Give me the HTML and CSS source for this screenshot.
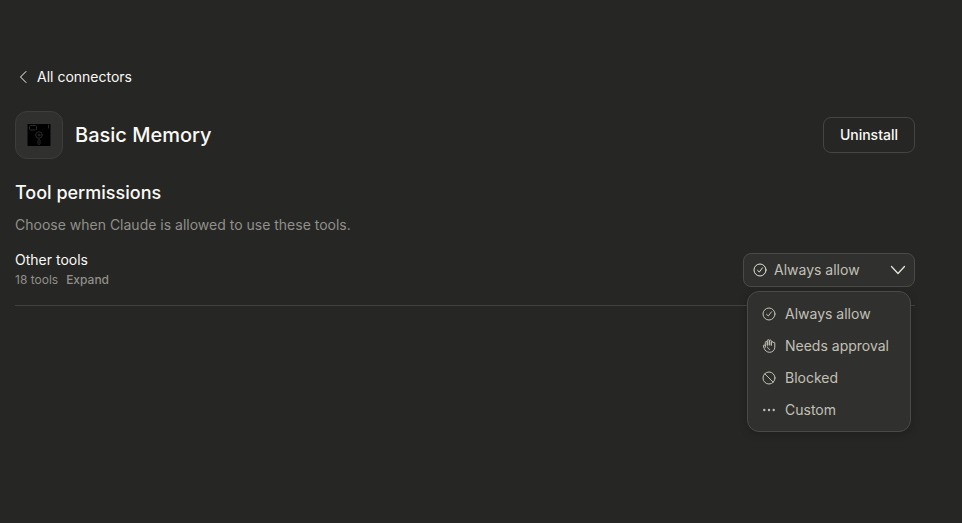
FILE: index.html
```html
<!DOCTYPE html>
<html lang="en">
  <head>
    <meta charset="UTF-8" />
    <meta name="viewport" content="width=device-width, initial-scale=1.0" />
    <title>Basic Memory - Connectors</title>
    <link rel="stylesheet" href="styles.css" />
  </head>
  <body>
    <main>
      <a class="back" href="#">
        <svg width="16" height="16" viewBox="0 0 16 16">
          <path d="M11 2.5 5.5 8l5.5 5.5" />
        </svg>
        All connectors
      </a>

      <header class="connector">
        <div class="logo">
          <svg width="24" height="24" viewBox="0 0 24 24">
            <path class="disk" d="M.5 1h23v22H.5z" />
            <rect x="2.5" y="2.5" width="7" height="4.5" rx="1" />
            <path d="M21.5 2v3" />
            <circle cx="12" cy="12" r="3.3" />
            <circle cx="12" cy="12" r="1" />
            <rect x="11" y="16.5" width="2" height="5" rx="1" />
          </svg>
        </div>
        <h1>Basic Memory</h1>
        <button type="button" class="uninstall">Uninstall</button>
      </header>

      <section>
        <h2>Tool permissions</h2>
        <p class="hint">Choose when Claude is allowed to use these tools.</p>

        <div class="group">
          <div class="group-info">
            <label for="permission">Other tools</label>
            <div class="group-meta">
              <span>18 tools</span>
              <button type="button" class="expand">Expand</button>
            </div>
          </div>

          <div class="picker">
            <svg class="picker-icon" width="14" height="14" viewBox="0 0 14 14">
              <circle cx="7" cy="7" r="6" />
              <path d="m4.6 7.4 1.7 1.6 3.2-4.2" />
            </svg>
            <select id="permission">
              <option value="allow">Always allow</option>
              <option value="ask">Needs approval</option>
              <option value="blocked">Blocked</option>
              <option value="custom">Custom</option>
            </select>
            <svg class="picker-arrow" width="16" height="16" viewBox="0 0 16 16">
              <path d="m1.5 4.5 6.5 7 6.500-7" />
            </svg>

            <div class="menu">
              <button type="button" value="allow">
                <svg width="14" height="14" viewBox="0 0 14 14">
                  <circle cx="7" cy="7" r="6" />
                  <path d="m4.6 7.4 1.7 1.6 3.2-4.2" />
                </svg>
                Always allow
              </button>
              <button type="button" value="ask">
                <svg width="14" height="14" viewBox="0 0 14 14">
                  <path d="M3.3 8.300V3.500a1 1 0 0 1 2 0V6.500V1.700a1 1 0 0 1 2 0V6.300V2a1 1 0 0 1 2 0V6.500V3.600a1 1 0 0 1 2 0" />
                  <path d="M11.300 3.600a.8.800 0 0 1 1.500.400V8.300a5 5 0 0 1-5 5c-3 0-4.800-1.600-5.600-4L1.300 7a.9.900 0 0 1 1.500-.8l.500.800" />
                  <path d="M5.500 8c.3 1.400 1 2.200 2.200 2.500" />
                </svg>
                Needs approval
              </button>
              <button type="button" value="blocked">
                <svg width="14" height="14" viewBox="0 0 14 14">
                  <circle cx="7" cy="7" r="6" />
                  <path d="m2.800 2.800 8.400 8.400" />
                </svg>
                Blocked
              </button>
              <button type="button" value="custom">
                <svg class="dots" width="14" height="14" viewBox="0 0 14 14">
                  <circle cx="2.300" cy="7" r="1.200" />
                  <circle cx="7" cy="7" r="1.200" />
                  <circle cx="11.700" cy="7" r="1.200" />
                </svg>
                Custom
              </button>
            </div>
          </div>
        </div>
      </section>
    </main>

    <script>
      const select = document.getElementById("permission");

      document.querySelectorAll(".menu button").forEach((item) => {
        item.addEventListener("click", () => {
          select.value = item.value;
        });
      });
    </script>
  </body>
</html>
```
FILE: styles.css
```css
* {
  box-sizing: border-box;
}

body {
  margin: 0;
  min-height: 100vh;
  background: #262624;
  color: #faf9f5;
  font-family: "Inter", sans-serif;
  font-size: 14px;
  line-height: 20px;
}

main {
  padding: 67px 47px 40px 15px;
}

h1,
h2,
p {
  margin: 0;
}

button,
select {
  font: inherit;
  color: inherit;
  cursor: pointer;
}

svg {
  flex: none;
  fill: none;
  stroke: currentColor;
  stroke-linecap: round;
  stroke-linejoin: round;
}

.back {
  display: flex;
  align-items: center;
  gap: 6px;
  width: fit-content;
  color: inherit;
  text-decoration: none;
}

.connector {
  display: flex;
  align-items: center;
  gap: 12px;
  margin-top: 24px;
}

.logo {
  display: flex;
  align-items: center;
  justify-content: center;
  width: 48px;
  height: 48px;
  background: #30302e;
  border: 1px solid #3d3d3a;
  border-radius: 12px;
}

.logo svg {
  stroke: #2a2a28;
}

.logo .disk {
  fill: #000;
  stroke: none;
}

h1 {
  flex: 1;
  font-size: 20px;
  font-weight: 500;
  line-height: 28px;
}

.uninstall {
  height: 36px;
  padding: 0 16px;
  background: none;
  border: 1px solid #454542;
  border-radius: 8px;
  font-weight: 500;
}

h2 {
  margin-top: 22px;
  font-size: 18px;
  font-weight: 500;
  line-height: 24px;
}

.hint {
  margin-top: 10px;
  color: #91908a;
}

.group {
  display: flex;
  align-items: center;
  justify-content: space-between;
  padding: 15px 0;
  border-bottom: 1px solid #41413e;
}

.group-info label {
  display: block;
}

.group-meta {
  display: flex;
  gap: 8px;
  color: #91908a;
  font-size: 12px;
}

.expand {
  padding: 0;
  background: none;
  border: none;
  font-weight: 500;
}

.picker {
  position: relative;
  width: 172px;
  color: #c2c0b6;
}

.picker select {
  display: block;
  appearance: none;
  width: 100%;
  height: 34px;
  padding: 0 30px;
  background: #30302e;
  border: 1px solid #4a4a47;
  border-radius: 8px;
}

/* icons lie over the select */
.picker-icon,
.picker-arrow {
  position: absolute;
  color: #e5e3da;
  pointer-events: none;
}

.picker-icon {
  top: 10px;
  left: 10px;
}

.picker-arrow {
  top: 9px;
  right: 9px;
  stroke-width: 1.3;
}

.menu {
  position: absolute;
  top: 100%;
  left: 4px;
  right: 4px;
  margin-top: 4px;
  padding: 6px 5px 5px;
  background: #30302e;
  border: 1px solid #4a4a47;
  border-radius: 12px;
  box-shadow: 0 2px 8px rgba(0, 0, 0, 0.2);
}

.menu button {
  display: flex;
  align-items: center;
  gap: 9px;
  width: 100%;
  height: 32px;
  padding: 0 9px;
  background: none;
  border: none;
  border-radius: 8px;
  white-space: nowrap;
}

.menu button:hover {
  background: #262624;
}

.menu .dots {
  fill: currentColor;
  stroke: none;
}
```
